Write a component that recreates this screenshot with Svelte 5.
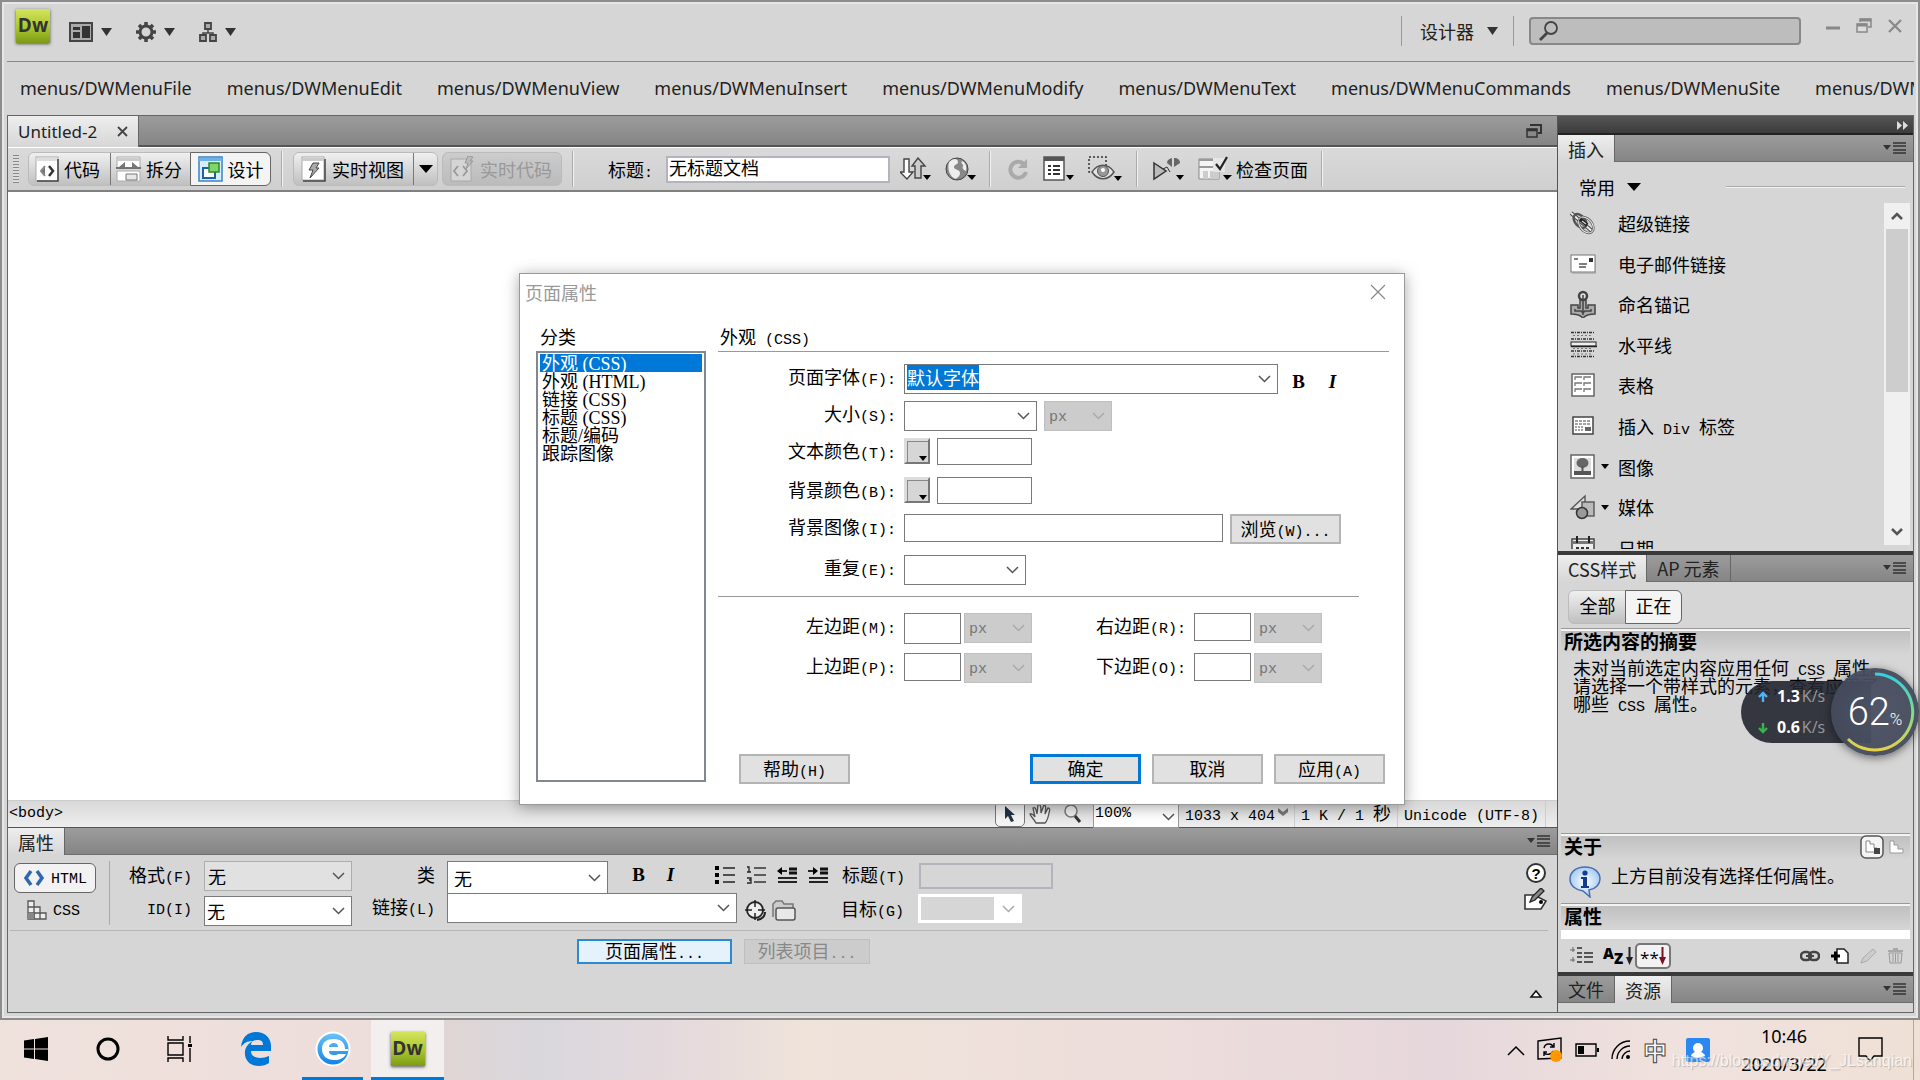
<script>
  import { onMount } from "svelte";

  const menus = ["File", "Edit", "View", "Insert", "Modify", "Text", "Commands", "Site", "Window"];
  const categories = ["外观 (CSS)", "外观 (HTML)", "链接 (CSS)", "标题 (CSS)", "标题/编码", "跟踪图像"];
  const inserts = [
    { icon: "link", text: "超级链接" },
    { icon: "mail", text: "电子邮件链接" },
    { icon: "anchor", text: "命名锚记" },
    { icon: "rule", text: "水平线" },
    { icon: "table", text: "表格" },
    { icon: "div", text: "插入 Div 标签" },
    { icon: "image", text: "图像", more: true },
    { icon: "media", text: "媒体", more: true },
    { icon: "date", text: "日期" },
  ];
  const margins = [
    { id: "ml", text: "左边距(M):", tall: true },
    { id: "mr", text: "右边距(R):" },
    { id: "mt", text: "上边距(P):" },
    { id: "mb", text: "下边距(O):" },
  ];

  let category = $state(categories[0]);
  let pageFont = $state("默认字体");
  let docTitle = $state("无标题文档");
  let fontInput;

  onMount(() => {
    fontInput.focus();
    fontInput.select();
  });

  const icons = {
    layout: [24, 20, `<rect x="1" y="1" width="22" height="18" fill="#aaa" stroke="#444" stroke-width="2"/><path d="M4 5h7v3H4zM4 10h7v6H4zM13 4h8v12h-8z" fill="#333"/>`],
    gear: [20, 20, `<circle cx="10" cy="10" r="6" fill="none" stroke="#444" stroke-width="3"/><path d="M10 0v4M10 16v4M0 10h4M16 10h4M3 3l3 3M14 14l3 3M17 3l-3 3M3 17l3-3" stroke="#444" stroke-width="3.500"/>`],
    site: [18, 20, `<path d="M9 7v4M4 13v-2h10v2" fill="none" stroke="#444" stroke-width="1.5"/><path d="M6 1h6v6H6zM1 13h6v6H1zM11 13h6v6h-6z" fill="#aaa" stroke="#444" stroke-width="1.8"/>`],
    down: [11, 8, `<path d="M0 0h11L5.500 8z" fill="#333"/>`],
    downBlack: [14, 8, `<path d="M0 0h14L7 8z" fill="#000"/>`],
    downSmall: [8, 5, `<path d="M0 0h8L4 5z" fill="#000"/>`],
    restore: [16, 15, `<path d="M4 4V1h11v8h-3" fill="none" stroke="#888" stroke-width="1.5"/><path d="M4 2h11" stroke="#888" stroke-width="3"/><rect x="1" y="6" width="10" height="8" fill="#ddd" stroke="#888" stroke-width="1.5"/><path d="M1 7h10" stroke="#888" stroke-width="3"/>`],
    restoreDark: [16, 15, `<path d="M4 2h11v8h-3" fill="none" stroke="#333" stroke-width="2"/><rect x="1" y="6" width="10" height="8" fill="#888" stroke="#333" stroke-width="1.5"/><path d="M1 7h10" stroke="#333" stroke-width="2.5"/>`],
    min: [14, 14, `<path d="M0 9h14" stroke="#888" stroke-width="3"/>`],
    close: [14, 14, `<path d="M1 1l12 12M13 1L1 13" stroke="#888" stroke-width="2.2"/>`],
    tabClose: [11, 11, `<path d="M1 1l9 9M10 1l-9 9" stroke="#444" stroke-width="1.8"/>`],
    dlgClose: [16, 16, `<path d="M1 1l14 14M15 1L1 15" stroke="#888" stroke-width="1.2"/>`],
    search: [20, 20, `<circle cx="12" cy="7" r="6" fill="none" stroke="#444" stroke-width="1.8"/><path d="M8 12l-7 7" stroke="#444" stroke-width="2.8"/>`],
    code: [24, 26, `<rect x="1" y="1" width="22" height="24" fill="#fff" stroke="#aaa"/><path d="M1 2h22v3H1z" fill="#ddd"/><path d="M23 3v22H2" fill="none" stroke="#444" stroke-width="1.5"/><path d="M10 11l-4 4 4 5z" fill="#777"/><path d="M10 10l-4 5 4 5" fill="none" stroke="#888" stroke-width="2"/><path d="M14 10l4 5-4 5" fill="none" stroke="#333" stroke-width="2.500"/>`],
    split: [25, 26, `<path d="M1 1h23v11H1zM1 15h23v10H1z" fill="#fff" stroke="#aaa"/><path d="M1 2h23v3H1z" fill="#ccc"/><path d="M9 6l-6 5h6zM16 6l6 5h-6z" fill="#777"/><path d="M0 12h25" stroke="#555" stroke-width="1.500"/><path d="M10 18h11v6H10z" fill="#e8e8e8" stroke="#777"/>`],
    design: [25, 26, `<rect x="1" y="1" width="23" height="24" fill="#d9ecfb" stroke="#3b82c4" stroke-width="1.5"/><path d="M1 2h23v3H1z" fill="#6fb0e6"/><rect x="5" y="12" width="12" height="10" fill="#fff" stroke="#1d62a8" stroke-width="2"/><rect x="11" y="7" width="10" height="9" fill="#7fd66a" stroke="#2b8a2b" stroke-width="1.5"/>`],
    live: [25, 26, `<rect x="1" y="1" width="22" height="23" fill="#fff" stroke="#aaa"/><path d="M1 2h22v3H1z" fill="#ccc"/><path d="M24 3v22H2" fill="none" stroke="#444" stroke-width="1.5"/><path d="M12 7h6l-3 5h3l-9 10 3-8H8z" fill="#aaa" stroke="#444"/>`],
    liveCode: [24, 26, `<rect x="1" y="3" width="20" height="22" fill="#d5d5d5" stroke="#aaa"/><path d="M8 10l-4 5 4 5M13 10l4 5-4 5" fill="none" stroke="#999" stroke-width="1.8"/><path d="M18 0l5 1-3 4h3l-7 8 2-6h-3z" fill="#bbb" stroke="#999"/>`],
    updown: [31, 24, `<path d="M4 2h5v13h4l-6 7-7-7h4z" fill="#fff" stroke="#444" stroke-width="1.4"/><path d="M15 21h6V9h4l-7-8-6 8h3z" fill="#ccc" stroke="#444" stroke-width="1.4"/><path d="M23 18h8l-4 5z"/>`],
    globe: [31, 24, `<circle cx="12" cy="12" r="11" fill="#888" stroke="#444"/><path d="M4 5c5-5 9-3 9 0s-4 2-4 5 6 2 6 6-3 4-4 6C5 20 2 13 4 5zM17 4c4 2 5 6 4 10-3-1-4-3-3-5s-3-2-1-5z" fill="#eee"/><path d="M22 18h9l-4 5z"/>`],
    refresh: [22, 22, `<path d="M17 6a8 8 0 1 0 2 8" fill="none" stroke="#aaa" stroke-width="4"/><path d="M20 1v9h-9z" fill="#aaa"/>`],
    options: [31, 26, `<rect x="1" y="1" width="20" height="23" fill="#fff" stroke="#555" stroke-width="1.5"/><path d="M1 3h20" stroke="#555" stroke-width="4"/><path d="M5 10h3M10 10h7M5 14h3M10 14h7M5 18h3M10 18h7" stroke="#333" stroke-width="2"/><path d="M23 19h8l-4 5z"/>`],
    eye: [34, 26, `<rect x="1" y="1" width="17" height="15" fill="none" stroke="#333" stroke-width="1.500" stroke-dasharray="2 2"/><path d="M4 16c6-9 16-9 22 0-6 9-16 9-22 0z" fill="#e4e4e4" stroke="#555" stroke-width="1.5"/><circle cx="15" cy="15" r="5.500" fill="#999" stroke="#555"/><circle cx="15" cy="14" r="2" fill="#fff"/><path d="M26 20h8l-4 5z"/>`],
    validate: [32, 24, `<path d="M1 6l12 8-12 8z" fill="#bbb" stroke="#333" stroke-width="1.5"/><path d="M14 6c0-3 2-4 5-5v9zM21 1c4 0 6 2 6 5l-6 4z" fill="#666"/><path d="M10 12l4-2 3 5" stroke="#333" fill="none"/><path d="M23 18h8l-4 5z"/>`],
    check: [34, 26, `<path d="M1 3h20v20H1z" fill="#f4f4f4" stroke="#888"/><path d="M1 3h20v2H1zM1 10h20v2H1z" fill="#999"/><path d="M5 15h5v8H5zM12 15h9v8h-9z" fill="#ccc"/><path d="M15 2h12v14H15z" fill="#e6e6e6"/><path d="M18 8l4 5 7-12" fill="none" stroke="#222" stroke-width="2.2"/><path d="M25 19h9l-5 5z"/>`],
    panelMenu: [24, 12, `<path d="M0 3h8L4 8z" fill="#333"/><path d="M10 1h13M10 4h13M10 8h13M10 11h13" stroke="#333" stroke-width="1.3"/>`],
    collapse: [12, 9, `<path d="M0 0l5 4.500L0 9zM6 0l5 4.500L6 9z" fill="#ddd"/>`],
    link: [26, 26, `<path d="M1 3l22 19" stroke="#444" stroke-width="4"/><path d="M1 3l22 19" stroke="#eee" stroke-width="2"/><g fill="none"><ellipse cx="10" cy="11" rx="8" ry="5" transform="rotate(50 10 11)" stroke="#555" stroke-width="2.500"/><ellipse cx="16" cy="15" rx="9" ry="6" transform="rotate(50 16 15)" stroke="#555" stroke-width="2.500"/><ellipse cx="16" cy="15" rx="9" ry="6" transform="rotate(50 16 15)" stroke="#eee"/></g><path d="M10 9l7 6" stroke="#222" stroke-width="4"/><path d="M12 11l4 3" stroke="#ccc" stroke-width="1.500"/>`],
    mail: [26, 20, `<rect x="1" y="1" width="24" height="17" fill="#fff" stroke="#777"/><path d="M2 19h24V3" fill="none" stroke="#999"/><path d="M4 5h4M9 10h8M9 13h7" stroke="#555" stroke-width="1.5"/><path d="M19 4h4v4h-4z" fill="#333"/>`],
    anchor: [26, 28, `<path d="M10 9h6v9h2v-3h7v9c-5 0-9 1-12 4-3-3-7-4-12-4v-9h7v3h2z" fill="#aaa" stroke="#444" stroke-width="1.5"/><circle cx="13" cy="6" r="4" fill="#ddd" stroke="#444" stroke-width="2.500"/><path d="M13 5v20M5 19v2h6l2 2 2-2h6v-2" fill="none" stroke="#444" stroke-width="1.500"/>`],
    rule: [27, 27, `<path d="M1 1.500h24M1 8h24M1 20h24M1 25.500h24" stroke="#333" stroke-width="1.3" stroke-dasharray="3 1 1 1"/><path d="M3 4.500h20M3 17.500h20M3 23h20" stroke="#777" stroke-dasharray="2 2"/><rect x="1" y="11" width="25" height="4" fill="#eee" stroke="#222"/><path d="M1 15.500h26" stroke="#222" stroke-width="1.5"/>`],
    table: [24, 24, `<rect x="1" y="1" width="22" height="22" fill="#fff" stroke="#666" stroke-width="1.5"/><path d="M4 7V4h7M13 7V4h7M4 13v-3h7M13 13v-3h7M4 19v-3h7M13 19v-3h7" fill="none" stroke="#777" stroke-width="1.3"/>`],
    div: [24, 20, `<rect x="2" y="1" width="20" height="17" fill="#fff" stroke="#444" stroke-width="1.5"/><path d="M4 5h16M4 8h16" stroke="#444" stroke-dasharray="3 1"/><path d="M4 11h8M4 14h8" stroke="#444" stroke-dasharray="2 1"/><path d="M14 11h6v4h-6z" fill="#666"/>`],
    image: [26, 26, `<rect x="1" y="1" width="23" height="23" fill="#fff" stroke="#666" stroke-width="1.5"/><rect x="4" y="4" width="17" height="13" fill="#ddd"/><ellipse cx="12.500" cy="9" rx="6" ry="5" fill="#666"/><path d="M12.500 12v6" stroke="#555" stroke-width="2"/><path d="M4 17h17v4H4z" fill="#555"/>`],
    media: [26, 26, `<path d="M1 15L15 2v13z" fill="#ddd" stroke="#555" stroke-width="1.4"/><rect x="12" y="8" width="12" height="14" fill="#bbb" stroke="#555" stroke-width="1.4"/><circle cx="12" cy="19" r="5.500" fill="#999" stroke="#333" stroke-width="1.5"/>`],
    date: [26, 26, `<path d="M2 4h22v20H2z" fill="#eee" stroke="#444" stroke-width="1.5"/><path d="M2 6h22v3H2z" fill="#777"/><path d="M7 1v7M19 1v7" stroke="#222" stroke-width="2"/><path d="M6 13h14M6 17h14" stroke="#333" stroke-width="2" stroke-dasharray="3 2"/>`],
    up: [12, 8, `<path d="M1 7l5-5 5 5" fill="none" stroke="#555" stroke-width="2.600"/>`],
    dn: [12, 8, `<path d="M1 1l5 5 5-5" fill="none" stroke="#555" stroke-width="2.600"/>`],
    pointer: [12, 18, `<path d="M1 1v13l3-3 3 6 3-1-3-6h4z" fill="#234"/>`],
    hand: [24, 22, `<path d="M7 20c-2-4-5-6-6-9 2-1 3 0 5 3L4 5c2-1 3 0 4 6l1-9c2-1 3 0 3 8l3-8c2 0 2 2 1 9l3-6c2 0 2 2 1 5-1 6-2 8-4 10z" fill="#eee" stroke="#555" stroke-width="1.3"/>`],
    zoom: [18, 20, `<circle cx="7" cy="7" r="6" fill="#eee" stroke="#777" stroke-width="1.5"/><path d="M11 12l5 6" stroke="#333" stroke-width="3"/>`],
    heart: [10, 8, `<path d="M0 0l5 4 5-4v4L5 8 0 4z" fill="#777"/>`],
    html: [22, 18, `<path d="M8 2L3 9l5 7M14 2l5 7-5 7" fill="none" stroke="#2f68b0" stroke-width="3.500"/>`],
    css: [20, 20, `<g fill="#eee" stroke="#555" stroke-width="1.3"><path d="M1 1h6v18H1zM7 7h6v12H7zM13 13h6v6h-6z"/><path d="M1 7h6M1 13h12M7 13v6" /></g><path d="M1 13h6v6H1z" fill="#888"/>`],
    ul: [20, 18, `<path d="M0 0h4v4H0zM0 7h4v4H0zM0 14h4v4H0z"/><path d="M8 2h12M8 9h12M8 16h12" stroke="#222" stroke-width="1.5"/>`],
    ol: [20, 18, `<path d="M1 1h2v5M1 6h4M1 12h4v2H3h2v3H1" fill="none" stroke="#222" stroke-width="1.3"/><path d="M8 2h12M8 9h12M8 16h12" stroke="#333" stroke-width="1.5"/>`],
    outdent: [20, 16, `<path d="M12 2h8M12 6h8" stroke="#111" stroke-width="3"/><path d="M1 11h19M1 15h19" stroke="#222" stroke-width="1.800"/><path d="M10 4H2" stroke="#111" stroke-width="1.800"/><path d="M0 4l5-4v8z"/>`],
    indent: [20, 16, `<path d="M12 2h8M12 6h8" stroke="#111" stroke-width="3"/><path d="M1 11h19M1 15h19" stroke="#222" stroke-width="1.800"/><path d="M0 4h8" stroke="#111" stroke-width="1.800"/><path d="M10 4L5 0v8z"/>`],
    target: [21, 21, `<circle cx="10" cy="10" r="8" fill="#eee" stroke="#222" stroke-width="1.800"/><path d="M10 0v7M10 13v7M0 10h7M13 10h7" stroke="#222" stroke-width="1.5"/><path d="M20 12c0 4-3 7-8 8" stroke="#222" stroke-width="2" fill="none"/>`],
    folder: [25, 21, `<path d="M1 17V4l3-3h6l2 3h9v4" fill="#ccc" stroke="#777" stroke-width="1.5"/><rect x="4" y="8" width="19" height="12" rx="2" fill="#e8e8e8" stroke="#555" stroke-width="1.5"/>`],
    edit: [24, 22, `<path d="M1 7h9l12 6-5 8H1z" fill="#fff" stroke="#333" stroke-width="1.600"/><path d="M6 14l2-5 9-9 3 3-9 9z" fill="#888" stroke="#222" stroke-width="1.3"/><circle cx="17" cy="14" r="2"/>`],
    tri: [14, 9, `<path d="M2 8l5-6 5 6z" fill="#fff" stroke="#111" stroke-width="1.5"/>`],
    stepsBox: [24, 24, `<rect x="1" y="1" width="22" height="22" rx="5" fill="#f4f4f4" stroke="#555" stroke-width="1.5"/><path d="M6 6h4v3h4v4h3v4H6z" fill="#fff" stroke="#888"/><path d="M14 13h6v6h-6z" fill="#444"/>`],
    steps: [16, 14, `<path d="M1 1h4v4h4v4h5v4H1z" fill="#fff" stroke="#999"/>`],
    info: [32, 32, `<defs><radialGradient id="ib"><stop offset="0" stop-color="#fff"/><stop offset="1" stop-color="#a9cdf5"/></radialGradient></defs><path d="M16 1C7 1 1 6 1 13s6 11 13 12l7 6-1-7c7-1 11-6 11-11C31 6 25 1 16 1z" fill="url(#ib)" stroke="#4a6fae" stroke-width="1.5"/><circle cx="16" cy="7" r="2.600" fill="#123c94"/><path d="M12 11h6v9h2v2h-8v-2h2v-7h-2z" fill="#123c94"/>`],
    tree: [24, 18, `<path d="M3 0v5M0 3h5M3 10v5M0 13h5" stroke="#666"/><path d="M7 1h5M7 6h5M7 10h5M7 15h5M14 6h9M14 10h9M14 15h9" stroke="#555" stroke-width="1.800"/>`],
    arrowDown: [7, 18, `<path d="M3.500 0v14" stroke="#222" stroke-width="2"/><path d="M0 10h7l-3.500 8z" fill="#222"/>`],
    arrowRed: [7, 18, `<path d="M3.500 0v14" stroke="#7a1020" stroke-width="2"/><path d="M0 10h7l-3.500 8z" fill="#7a1020"/>`],
    chain: [20, 12, `<rect x="1" y="2" width="10" height="8" rx="4" fill="none" stroke="#444" stroke-width="2.500"/><rect x="9" y="2" width="10" height="8" rx="4" fill="none" stroke="#444" stroke-width="2.500"/><path d="M6 6h8" stroke="#444" stroke-width="2"/>`],
    newRule: [18, 16, `<path d="M6 1h7l4 4v10H6z" fill="#fff" stroke="#222" stroke-width="1.5"/><path d="M0 8h9M4.500 3.500v9" stroke="#000" stroke-width="3"/>`],
    pencil: [16, 16, `<path d="M1 15l2-5L13 1l3 3-9 9z" fill="#ccc" stroke="#aaa"/>`],
    trash: [17, 16, `<path d="M1 3h15M6 1h5" stroke="#999" stroke-width="1.5"/><path d="M2 5h13l-1 10H3zM6 6v8M8.500 6v8M11 6v8" fill="none" stroke="#999"/>`],
    win: [24, 24, `<path d="M0 3.400l10-1.400v9.500H0zM11 1.900L24 0v11.500H11zM0 12.500h10V22L0 20.600zM11 12.500h13V24l-13-1.900z"/>`],
    cortana: [24, 24, `<circle cx="12" cy="12" r="10" fill="none" stroke="#000" stroke-width="3"/>`],
    taskview: [26, 26, `<path d="M1 0v4h15V0M1 26v-4h15v4M1 7h15v12H1zM23 0v7M23 12v14" fill="none" stroke="#000" stroke-width="1.400"/><path d="M21 8h4v3h-4z"/>`],
    edge: [30, 34, `<path d="M0 15C1 5 7 0 15 0c9 0 15 6 15 14v5H10c0 5 4 7 9 7 3 0 6-1 9-2v7c-3 2-6 3-10 3C9 34 3 28 4 19c1-5 4-8 8-10C6 9 3 11 0 15zM10 13h12c0-4-2-5-6-5-3 0-6 2-6 5z" fill="#0078d7" fill-rule="evenodd"/>`],
    ie: [36, 36, `<defs><linearGradient id="ieg" x2="0" y2="1"><stop offset="0" stop-color="#6cc5f8"/><stop offset="1" stop-color="#1180ea"/></linearGradient></defs><circle cx="18" cy="18" r="16.500" fill="url(#ieg)" stroke="#fff" stroke-width="2"/><path d="M33 20H14c0 3 2 4 5 4 2 0 3 0 4-1h8c-2 4-6 6-12 6C12 29 7 25 7 18S12 8 19 8s11 4 11 10h3zM14 16h9c0-3-2-4-4-4s-5 1-5 4z" fill="#fff" fill-rule="evenodd"/>`],
    chevron: [18, 11, `<path d="M1 10l8-8 8 8" fill="none" stroke="#000" stroke-width="1.500"/>`],
    sync: [26, 26, `<path d="M1 4l23-3v20L1 22z" fill="none" stroke="#000" stroke-width="1.400"/><path d="M7 11c1-5 7-5 9-2M17 6v4h-4M16 14c-1 4-7 4-9 2M7 19v-4h3" fill="none" stroke="#000" stroke-width="1.400"/><circle cx="19" cy="19" r="6" fill="#ff9800"/>`],
    battery: [24, 14, `<path d="M1 1h20v12H1z" fill="none" stroke="#000" stroke-width="1.400"/><path d="M3 3h6v8H3zM22 5h2v4h-2z"/>`],
    wifi: [20, 20, `<g fill="none" stroke="#000" stroke-width="1.400"><path d="M1 19C1 9 9 1 19 1M6 19C6 12 12 6 19 6M11 19c0-4 4-8 8-8"/></g><circle cx="17" cy="17" r="2"/>`],
    user: [24, 24, `<rect width="24" height="24" rx="2" fill="#2b88f0"/><path d="M12 5a5 5 0 0 1 5 5c0 2-1 3-2 4 2 1 4 2 4 4l-3 1c-1 1-7 1-8 0l-3-1c0-2 2-3 4-4-1-1-2-2-2-4a5 5 0 0 1 5-5z" fill="#fff"/>`],
    notice: [26, 26, `<path d="M1 1h23v18h-8l-4 5-4-5H1z" fill="none" stroke="#000" stroke-width="1.400"/>`],
    speedUp: [12, 12, `<path d="M6 11V2M2 6l4-4 4 4" fill="none" stroke="#4bb4f5" stroke-width="2.400"/>`],
    speedDown: [12, 12, `<path d="M6 1v9M2 6l4 4 4-4" fill="none" stroke="#35b44a" stroke-width="2.400"/>`],
  };
</script>

{#snippet icon(name)}
  <svg class="icon" width={icons[name][0]} height={icons[name][1]} viewBox="0 0 {icons[name][0]} {icons[name][1]}" aria-hidden="true">{@html icons[name][2]}</svg>
{/snippet}

<!-- latin runs are set in a half width face so they line up with the full width glyphs -->
{#snippet mix(text)}<span class="mix">{#each text.match(/[ -~]+|[^ -~]+/g) as run}{#if /[ -~]/.test(run)}<span class="lat">{run}</span>{:else}{run}{/if}{/each}</span>{/snippet}

<div class="screen">
  <div class="window">
    <header class="appbar">
      <div class="logo">Dw</div>
      <button class="drop">{@render icon("layout")}{@render icon("down")}</button>
      <button class="drop">{@render icon("gear")}{@render icon("down")}</button>
      <button class="drop">{@render icon("site")}{@render icon("down")}</button>
      <button class="workspace-menu">设计器{@render icon("down")}</button>
      <div class="search">
        {@render icon("search")}
        <input type="search" aria-label="搜索" />
      </div>
      <div class="winbtns">
        <button aria-label="最小化">{@render icon("min")}</button>
        <button aria-label="还原">{@render icon("restore")}</button>
        <button aria-label="关闭">{@render icon("close")}</button>
      </div>
    </header>

    <nav class="menubar">
      {#each menus as m}
        <button>menus/DWMenu{m}</button>
      {/each}
    </nav>

    <div class="work">
      <main class="left">
        <div class="tabs doc-tabs">
          <button class="tab active doc">Untitled-2{@render icon("tabClose")}</button>
          <span class="end">{@render icon("restoreDark")}</span>
        </div>

        <div class="toolbar">
          <span class="grip"></span>
          <div class="group views">
            <button>{@render icon("code")}代码</button>
            <button>{@render icon("split")}拆分</button>
            <button class="on">{@render icon("design")}设计</button>
          </div>
          <span class="sep"></span>
          <div class="group live">
            <button>{@render icon("live")}实时视图</button>
            <button class="arrow" aria-label="实时视图选项">{@render icon("downBlack")}</button>
          </div>
          <div class="group off">
            <button disabled>{@render icon("liveCode")}实时代码</button>
          </div>
          <span class="sep"></span>
          <label class="doc-label" for="doc-title">{@render mix("标题:")}</label>
          <input id="doc-title" class="doc-title" bind:value={docTitle} />
          <div class="tools">
            <button aria-label="文件管理">{@render icon("updown")}</button>
            <button aria-label="预览">{@render icon("globe")}</button>
          </div>
          <span class="sep"></span>
          <div class="tools wide">
            <button aria-label="刷新">{@render icon("refresh")}</button>
            <button aria-label="视图选项">{@render icon("options")}</button>
            <button aria-label="可视化助理">{@render icon("eye")}</button>
          </div>
          <span class="sep"></span>
          <div class="tools last">
            <button aria-label="验证标记">{@render icon("validate")}</button>
            <button class="check">{@render icon("check")}检查页面</button>
          </div>
          <span class="sep"></span>
        </div>

        <div class="canvas"></div>

        <div class="status">
          <button class="crumb lat">&lt;body&gt;</button>
          <button class="tool on" aria-label="选取">{@render icon("pointer")}</button>
          <button class="tool" aria-label="手形">{@render icon("hand")}</button>
          <button class="tool" aria-label="缩放">{@render icon("zoom")}</button>
          <select class="zoom-select" aria-label="缩放比率"><option>100%</option></select>
          <span class="cell">{@render mix("1033 x 404")}{@render icon("heart")}</span>
          <span class="cell">{@render mix("1 K / 1 秒")}</span>
          <span class="cell">{@render mix("Unicode (UTF-8)")}</span>
        </div>

        <section class="props">
          <div class="tabs">
            <button class="tab active">属性</button>
            <span class="end">{@render icon("panelMenu")}</span>
          </div>
          <div class="props-top">
            <div class="modes">
              <button class="on">{@render icon("html")}<span class="lat">HTML</span></button>
              <button>{@render icon("css")}<span class="lat">CSS</span></button>
            </div>
            <div class="props-grid">
              <label for="fmt">{@render mix("格式(F)")}</label>
              <select id="fmt" class="flat"><option>无</option></select>
              <label for="cls">类</label>
              <div class="line">
                <select id="cls" class="cls"><option>无</option></select>
                <button class="bi bold">B</button>
                <button class="bi italic">I</button>
                <div class="lists">
                  <button aria-label="项目列表">{@render icon("ul")}</button>
                  <button aria-label="编号列表">{@render icon("ol")}</button>
                  <button aria-label="文本凸出">{@render icon("outdent")}</button>
                  <button aria-label="文本缩进">{@render icon("indent")}</button>
                </div>
                <label for="ttl">{@render mix("标题(T)")}</label>
                <input id="ttl" class="ttl" disabled />
              </div>
              <label for="pid">{@render mix("ID(I)")}</label>
              <select id="pid" class="pid"><option>无</option></select>
              <label for="lnk">{@render mix("链接(L)")}</label>
              <div class="line">
                <select id="lnk" class="lnk"><option></option></select>
                <button aria-label="指向文件">{@render icon("target")}</button>
                <button aria-label="浏览文件">{@render icon("folder")}</button>
                <label class="goal" for="tgt">{@render mix("目标(G)")}</label>
                <select id="tgt" class="tgt" disabled><option></option></select>
              </div>
            </div>
            <div class="side">
              <button class="help" aria-label="帮助">?</button>
              <button aria-label="快速标签编辑器">{@render icon("edit")}</button>
            </div>
          </div>
          <div class="props-bottom">
            <button class="page-props">{@render mix("页面属性...")}</button>
            <button class="list-items" disabled>{@render mix("列表项目...")}</button>
            <span class="fold">{@render icon("tri")}</span>
          </div>
        </section>
      </main>

      <aside class="right">
        <div class="dock">{@render icon("collapse")}</div>
        <div class="tabs">
          <button class="tab active">插入</button>
          <span class="end">{@render icon("panelMenu")}</span>
        </div>
        <div class="common">
          <button>常用{@render icon("downBlack")}</button>
          <hr />
        </div>
        <div class="insert">
          <ul>
            {#each inserts as item}
              <li>
                <span class="pic">{@render icon(item.icon)}</span>
                <span class="more">{#if item.more}{@render icon("downSmall")}{/if}</span>
                {@render mix(item.text)}
              </li>
            {/each}
          </ul>
          <div class="scroll">
            <button aria-label="向上">{@render icon("up")}</button>
            <div class="thumb"></div>
            <button class="last" aria-label="向下">{@render icon("dn")}</button>
          </div>
        </div>

        <div class="tabs split">
          <button class="tab active">CSS样式</button>
          <button class="tab">AP 元素</button>
          <span class="end">{@render icon("panelMenu")}</span>
        </div>
        <div class="css">
          <div class="group pick">
            <button>全部</button>
            <button class="on">正在</button>
          </div>
          <h3>所选内容的摘要</h3>
          <p class="summary">{@render mix("未对当前选定内容应用任何 CSS 属性。")}<br />请选择一个带样式的元素，查看应用了<br />{@render mix("哪些 CSS 属性。")}</p>
          <h3>关于<span class="about">{@render icon("stepsBox")}{@render icon("steps")}</span></h3>
          <p class="note">{@render icon("info")}<span>上方目前没有选择任何属性。</span></p>
          <h3>属性</h3>
          <div class="blank"></div>
          <div class="css-tools">
            <button aria-label="类别视图">{@render icon("tree")}</button>
            <button class="az" aria-label="列表视图"><b>A</b><b class="z">Z</b>{@render icon("arrowDown")}</button>
            <button class="set" aria-label="只显示设置属性"><span>*</span><span>*</span>{@render icon("arrowRed")}</button>
            <span class="acts">{@render icon("chain")}{@render icon("newRule")}{@render icon("pencil")}{@render icon("trash")}</span>
          </div>
        </div>
        <div class="tabs split">
          <button class="tab">文件</button>
          <button class="tab active">资源</button>
          <span class="end">{@render icon("panelMenu")}</span>
        </div>
        <div class="foot"></div>
      </aside>
    </div>
  </div>

  <footer class="taskbar">
    <button aria-label="开始">{@render icon("win")}</button>
    <button aria-label="搜索">{@render icon("cortana")}</button>
    <button aria-label="任务视图">{@render icon("taskview")}</button>
    <button class="pinned" aria-label="Edge">{@render icon("edge")}</button>
    <button class="running" aria-label="浏览器">{@render icon("ie")}</button>
    <button class="running current"><span class="logo">Dw</span></button>
    <div class="tray">
      {@render icon("chevron")}
      {@render icon("sync")}
      {@render icon("battery")}
      {@render icon("wifi")}
      <span class="ime">中</span>
      {@render icon("user")}
      <div class="clock"><span>10:46</span><span>2020/3/22</span></div>
      {@render icon("notice")}
    </div>
    <span class="mark">https://blog.csdn.net/Y_JLsanqian</span>
  </footer>

  <div class="dialog" role="dialog" aria-labelledby="dlg-title">
    <div class="dlg-title">
      <span id="dlg-title">页面属性</span>
      <button aria-label="关闭">{@render icon("dlgClose")}</button>
    </div>
    <div class="dlg-body">
      <div class="cats">
        <label for="cats">分类</label>
        <select id="cats" size="6" bind:value={category}>
          {#each categories as c}
            <option value={c}>{c}</option>
          {/each}
        </select>
      </div>
      <div class="pane">
        <h2>{@render mix("外观 (CSS)")}</h2>
        <div class="form">
          <label for="f1">{@render mix("页面字体(F):")}</label>
          <div class="ctl">
            <input id="f1" class="combo" bind:value={pageFont} bind:this={fontInput} />
            <button class="bi bold">B</button>
            <button class="bi italic">I</button>
          </div>
          <label for="f2">{@render mix("大小(S):")}</label>
          <div class="ctl">
            <select id="f2" class="size"><option></option></select>
            <select class="px" disabled aria-label="大小单位"><option>px</option></select>
          </div>
          <label for="f3">{@render mix("文本颜色(T):")}</label>
          <div class="ctl">
            <button class="swatch" aria-label="选取文本颜色">{@render icon("downSmall")}</button>
            <input id="f3" class="color" />
          </div>
          <label for="f4">{@render mix("背景颜色(B):")}</label>
          <div class="ctl">
            <button class="swatch" aria-label="选取背景颜色">{@render icon("downSmall")}</button>
            <input id="f4" class="color" />
          </div>
          <label for="f5">{@render mix("背景图像(I):")}</label>
          <div class="ctl">
            <input id="f5" class="file" />
            <button class="btn">{@render mix("浏览(W)...")}</button>
          </div>
          <label for="f6">{@render mix("重复(E):")}</label>
          <div class="ctl">
            <select id="f6" class="repeat"><option></option></select>
          </div>
        </div>
        <div class="margins">
          {#each margins as m}
            <label for={m.id}>{@render mix(m.text)}</label>
            <div class="ctl">
              <input id={m.id} class:tall={m.tall} />
              <select class="px" disabled aria-label="{m.text}单位"><option>px</option></select>
            </div>
          {/each}
        </div>
        <div class="actions">
          <button class="btn help-btn">{@render mix("帮助(H)")}</button>
          <button class="btn ok">确定</button>
          <button class="btn">取消</button>
          <button class="btn">{@render mix("应用(A)")}</button>
        </div>
      </div>
    </div>
  </div>

  <div class="speed">
    <div class="rates">
      <div>{@render icon("speedUp")}<b>1.3</b><span>K/s</span></div>
      <div>{@render icon("speedDown")}<b>0.6</b><span>K/s</span></div>
    </div>
    <div class="ball">
      <svg class="ring" viewBox="0 0 88 88" aria-hidden="true">
        <defs>
          <linearGradient id="rg" x1="0" y1="1" x2="0" y2="0">
            <stop offset="0" stop-color="#e6d04a" />
            <stop offset="0.5" stop-color="#7bdc8e" />
            <stop offset="1" stop-color="#35cfe0" />
          </linearGradient>
        </defs>
        <path d="M44 6A38 38 0 1 1 17 71" fill="none" stroke="url(#rg)" stroke-width="3" />
      </svg>
      <span class="num">62</span><span class="pct">%</span>
    </div>
  </div>
</div>

<style>
  :global(body) {
    margin: 0;
    background: #d6d6d6;
  }

  .screen {
    position: relative;
    display: flex;
    flex-direction: column;
    min-height: 100vh;
    overflow: hidden;
    font: 18px/18px "Noto Sans CJK SC", sans-serif;
    color: #000;
  }
  .screen :global(*) {
    box-sizing: border-box;
  }
  button {
    font: inherit;
    color: inherit;
    border: 0;
    padding: 0;
    background: none;
    white-space: nowrap;
  }
  input, select {
    font: inherit;
    color: #000;
    margin: 0;
    min-width: 0;
    padding: 0 2px;
    border: 1px solid #7a7a7a;
    border-radius: 0;
    background-color: #fff;
    outline: none;
  }
  select {
    appearance: none;
    padding: 0 4px;
    background-repeat: no-repeat;
    background-position: right 6px center;
    background-image: url("data:image/svg+xml,%3Csvg xmlns='http://www.w3.org/2000/svg' width='13' height='8'%3E%3Cpath d='M1 1l5.500 5.500L12 1' fill='none' stroke='%23555' stroke-width='1.500'/%3E%3C/svg%3E");
  }
  select:disabled {
    opacity: 1;
    background-image: url("data:image/svg+xml,%3Csvg xmlns='http://www.w3.org/2000/svg' width='13' height='8'%3E%3Cpath d='M1 1l5.500 5.500L12 1' fill='none' stroke='%23aaa' stroke-width='1.500'/%3E%3C/svg%3E");
  }
  .icon {
    display: block;
    flex: none;
  }
  .mix {
    white-space: pre;
  }
  .lat {
    font-family: "Liberation Mono", monospace;
    font-size: 15px;
  }
  .mix .lat {
    line-height: 0;
  }

  /* frame */
  .window {
    flex: 1;
    display: flex;
    flex-direction: column;
    min-width: 0;
    padding: 0 4px 5px 5px;
    border: 2px solid #8d8d8d;
    background: #d6d6d6;
    box-shadow: inset 0 0 0 2px #e6e6e6;
  }
  .appbar {
    display: flex;
    align-items: center;
    height: 60px;
    padding: 0 12px 12px 9px;
    border-bottom: 1px solid #888;
  }
  .logo {
    display: grid;
    place-items: center;
    width: 34px;
    height: 34px;
    margin-right: 4px;
    background: linear-gradient(#d3e45c, #a9c62c 55%, #7d9a18);
    box-shadow: 0 1px 3px #555;
    font: bold 19px/19px "Open Sans", sans-serif;
    color: #333;
  }
  .drop {
    display: flex;
    align-items: center;
    gap: 8px;
    margin: 12px 9px 0 15px;
  }
  .workspace-menu {
    display: flex;
    align-items: center;
    gap: 13px;
    height: 30px;
    margin: 10px 15px 0 auto;
    padding: 0 15px 0 18px;
    border: solid #999;
    border-width: 0 1px;
    color: #222;
  }
  .search {
    display: flex;
    align-items: center;
    width: 272px;
    height: 28px;
    margin-top: 11px;
    padding: 0 8px;
    border: 2px solid #888;
    border-radius: 4px;
    background: #bdbdbd;
  }
  .search input {
    flex: 1;
    border: 0;
    background: none;
  }
  .winbtns {
    display: flex;
    gap: 16px;
    margin-left: 25px;
  }
  .menubar {
    display: flex;
    align-items: center;
    gap: 35px;
    height: 53px;
    padding: 0 0 2px 13px;
    overflow: hidden;
    font: 18px/24px "Noto Sans", sans-serif;
    color: #222;
  }

  .work {
    flex: 1;
    display: grid;
    grid-template-columns: minmax(0, 1fr) 356px;
    border: 1px solid #666;
  }
  .left, .right {
    display: flex;
    flex-direction: column;
    min-width: 0;
  }

  .tabs {
    display: flex;
    align-items: stretch;
    height: 27px;
    border-bottom: 1px solid #6e6e6e;
    background: linear-gradient(#9c9c9c, #858585);
  }
  .tab {
    height: 26px;
    padding: 0 10px;
    border-right: 1px solid #666;
    color: #222;
  }
  .tab.active {
    height: 27px;
    background: linear-gradient(#eee, #d6d6d6);
  }
  .end {
    display: flex;
    align-items: center;
    margin-left: auto;
    padding-right: 6px;
  }
  .doc-tabs {
    height: 31px;
    border-bottom: 2px solid #555;
  }
  .tab.doc {
    display: flex;
    align-items: center;
    gap: 20px;
    height: 31px;
    font: 17px/24px "Noto Sans", sans-serif;
  }
  .doc-tabs .end {
    padding-right: 15px;
  }

  .toolbar {
    display: flex;
    align-items: center;
    height: 45px;
    padding-left: 5px;
    border-top: 1px solid #fff;
    border-bottom: 2px solid #808080;
    background: linear-gradient(#dadada, #cfcfcf);
  }
  .grip {
    width: 6px;
    height: 28px;
    margin-right: 9px;
    background: repeating-linear-gradient(#888 0 1px, #ddd 1px 3px);
  }
  .sep {
    width: 2px;
    height: 36px;
    margin: 0 10px;
    border-left: 1px solid #aaa;
    background: #f2f2f2;
  }
  .group {
    display: flex;
    height: 34px;
    border: 1px solid #bbb;
    border-radius: 6px;
    background: linear-gradient(#f0f0f0, #c0c0c0);
  }
  .group button {
    display: flex;
    align-items: center;
    justify-content: center;
    gap: 6px;
    width: 81px;
    padding-right: 2px;
  }
  .views button {
    gap: 5px;
    padding-right: 4px;
  }
  .group button + button {
    border-left: 1px solid #777;
  }
  .group .on {
    margin: -1px;
    padding-right: 0;
    border: 1px solid #666;
    border-radius: 0 6px 6px 0;
    background: #f4f4f4;
  }
  .group.live button {
    width: 119px;
  }
  .group.live .arrow {
    width: 24px;
    padding: 0;
  }
  .group.off {
    margin-left: 4px;
    background: linear-gradient(#ccc, #bbb);
    color: #999;
    text-shadow: 1px 1px #eee;
  }
  .group.off button {
    width: 118px;
    color: #999;
  }
  .doc-label {
    margin: 0 13px 0 24px;
  }
  .doc-title {
    width: 224px;
    height: 27px;
    padding: 0 1px 4px;
    border: 2px solid #b4b4bc;
  }
  .tools {
    display: flex;
    gap: 14px;
    margin: 0 3px 0 10px;
  }
  .tools.wide {
    gap: 14px;
    margin: 0 4px 0 6px;
  }
  .tools.last {
    gap: 13px;
    margin-left: 5px;
  }
  .check {
    display: flex;
    align-items: center;
    gap: 4px;
  }

  .canvas {
    flex: 1;
    min-height: 200px;
    background: #fff;
  }

  .status {
    display: flex;
    align-items: center;
    height: 28px;
    padding-right: 11px;
    border-top: 1px solid #ccc;
    border-bottom: 1px solid #555;
    background: linear-gradient(#d8d8d8, #eee);
  }
  .crumb {
    margin: 0 auto 0 1px;
  }
  .tool {
    display: grid;
    place-items: center;
    width: 32px;
    height: 26px;
  }
  .tool.on {
    width: 30px;
    border: 1px solid #777;
    border-radius: 5px;
    background: #f4f4f4;
  }
  .zoom-select {
    width: 86px;
    height: 27px;
    margin-left: 4px;
    padding: 0 1px;
    border-color: #999;
    background-position: right 3px bottom 6px;
    font: 15px/18px "Liberation Mono", monospace;
  }
  .cell {
    display: flex;
    align-items: center;
    gap: 3px;
    height: 26px;
    padding: 0 6px 5px;
    border-right: 1px solid #ccc;
  }

  /* property inspector */
  .props-top {
    display: flex;
    height: 76px;
    margin: 0 9px 0 2px;
    padding: 6px 0 5px 4px;
    border-bottom: 1px solid #b5b5b5;
  }
  .modes {
    width: 96px;
    border-right: 1px solid #aaa;
  }
  .modes button {
    display: flex;
    align-items: center;
    gap: 6px;
    width: 82px;
    height: 30px;
    margin-top: 2px;
    padding-left: 13px;
  }
  .modes .on {
    padding-left: 8px;
    border: 1px solid #666;
    border-radius: 6px;
    background: #f2f2f2;
  }
  .modes .lat {
    padding-top: 4px;
  }
  .props-grid {
    display: grid;
    grid-template-columns: 76px 148px 71px 1fr;
    grid-template-rows: 32px 32px;
    column-gap: 12px;
    margin-left: 6px;
  }
  .props-grid label {
    line-height: 26px;
    text-align: right;
  }
  .flat {
    height: 30px;
    padding-left: 3px;
    border-color: #adadad;
    background-color: #e1e1e1;
  }
  .pid {
    height: 30px;
    margin-top: 3px;
    padding-left: 2px;
  }
  .line {
    display: flex;
    align-items: flex-start;
  }
  .line button {
    height: 28px;
  }
  .cls {
    width: 161px;
    height: 33px;
    padding-left: 6px;
  }
  .bi {
    width: 15px;
    font: bold 19px/28px "Liberation Serif", serif;
  }
  .italic {
    font-style: italic;
  }
  .line .bold {
    margin: 0 17px 0 23px;
  }
  .lists {
    display: flex;
    gap: 11px;
    margin: 0 14px 0 37px;
  }
  .lists button {
    display: flex;
    align-items: center;
  }
  .ttl {
    width: 134px;
    height: 26px;
    margin: 2px 0 0 14px;
    border: 2px solid #b4b4bc;
    background: #d6d6d6;
  }
  .lnk {
    width: 290px;
    height: 30px;
    margin-right: 8px;
  }
  .lnk ~ button {
    margin: 3px 6px 0 0;
  }
  .goal {
    margin: 2px 14px 0 38px;
  }
  .tgt {
    width: 104px;
    height: 29px;
    margin-top: 1px;
    border: 3px solid #fff;
  }
  .tgt:disabled {
    background:
      url("data:image/svg+xml,%3Csvg xmlns='http://www.w3.org/2000/svg' width='13' height='8'%3E%3Cpath d='M1 1l5.500 5.500L12 1' fill='none' stroke='%23aaa' stroke-width='1.500'/%3E%3C/svg%3E") no-repeat right 4px center,
      linear-gradient(#fff, #fff) no-repeat right / 25px 100%,
      #d6d6d6;
  }
  .side {
    display: flex;
    flex-direction: column;
    align-items: center;
    gap: 5px;
    margin-left: auto;
    padding-top: 2px;
  }
  .help {
    width: 20px;
    height: 20px;
    border: 2px solid #333;
    border-radius: 50%;
    background: #fff;
    font: bold 15px/15px "Liberation Sans", sans-serif;
  }
  .props-bottom {
    display: flex;
    align-items: flex-start;
    gap: 12px;
    height: 81px;
    padding: 8px 14px 14px 569px;
  }
  .page-props {
    width: 155px;
    height: 25px;
    padding-bottom: 3px;
    border: 2px solid #2a8ad8;
    background: #e5f1fb;
  }
  .list-items {
    width: 126px;
    height: 25px;
    padding-bottom: 3px;
    border: 1px solid #bfbfbf;
    background: #ccc;
    color: #888;
  }
  .fold {
    align-self: flex-end;
    margin-left: auto;
  }

  /* panel dock */
  .right {
    border-left: 1px solid #555;
  }
  .dock {
    display: flex;
    justify-content: flex-end;
    height: 19px;
    padding: 5px 4px;
    border-bottom: 2px solid #222;
    background: linear-gradient(#555, #3c3c3c);
  }
  .common {
    display: flex;
    align-items: center;
    justify-content: space-between;
    height: 41px;
    padding: 9px 8px 0 21px;
  }
  .common button {
    display: flex;
    align-items: center;
    gap: 12px;
  }
  .common hr {
    width: 179px;
    margin: 0;
    border: 0;
    border-top: 1px solid #aaa;
    border-bottom: 1px solid #f4f4f4;
  }
  .insert {
    display: flex;
    height: 346px;
    margin-bottom: 2px;
    overflow: hidden;
  }
  .insert ul {
    flex: 1;
    display: grid;
    grid-template-rows: repeat(9, 1fr);
    height: 365px;
    margin: 0;
    padding: 0;
    list-style: none;
  }
  .insert li {
    display: flex;
    align-items: center;
  }
  .pic {
    display: grid;
    place-items: center;
    width: 28px;
    margin-left: 11px;
  }
  .more {
    width: 21px;
    padding-left: 4px;
  }
  .scroll {
    display: flex;
    flex-direction: column;
    align-items: center;
    width: 26px;
    height: 342px;
    margin-right: 3px;
    background: #f0f0f0;
  }
  .scroll button {
    display: grid;
    place-items: center;
    height: 26px;
  }
  .thumb {
    width: 22px;
    height: 163px;
    background: #cdcdcd;
  }
  .scroll .last {
    margin-top: auto;
  }
  .split {
    height: 31px;
    border-top: 4px solid #3a3a3a;
  }
  .css {
    flex: 1;
    display: flex;
    flex-direction: column;
    padding: 8px 3px 0;
  }
  .pick {
    align-self: flex-start;
    margin: 0 0 4px 7px;
  }
  .pick button {
    width: 57px;
    padding: 0 0 5px;
  }
  h3 {
    display: flex;
    justify-content: space-between;
    height: 27px;
    margin: 0;
    padding: 0 5px 0 3px;
    border-top: 1px solid #999;
    box-shadow: inset 0 2px #f4f4f4;
    background: linear-gradient(#bebebe, #d6d6d6);
    font: bold 19px/24px "Noto Sans CJK SC", sans-serif;
  }
  .summary {
    flex: 1;
    margin: 0;
    padding: 3px 0 0 12px;
    white-space: nowrap;
  }
  .about {
    display: flex;
    align-items: center;
    gap: 5px;
  }
  .note {
    display: flex;
    gap: 10px;
    height: 43px;
    margin: 0;
    padding: 6px 0 0 8px;
  }
  .blank {
    height: 9px;
    background: #fff;
  }
  .css-tools {
    display: flex;
    align-items: center;
    height: 33px;
    padding: 0 6px 0 9px;
  }
  .az, .set {
    display: flex;
    align-items: center;
    height: 26px;
    margin-left: 9px;
    font: bold 15px/15px "Open Sans", sans-serif;
  }
  .az b {
    padding-bottom: 5px;
  }
  .az .z {
    padding: 6px 3px 0 0;
  }
  .set {
    margin-left: 2px;
    padding: 0 3px;
    border: 2px solid #777;
    border-radius: 5px;
    background: #f2f2f2;
    font-size: 17px;
    font-weight: normal;
  }
  .set span {
    padding-top: 4px;
  }
  .acts {
    display: flex;
    align-items: center;
    gap: 11px;
    margin-left: auto;
  }
  .foot {
    height: 9px;
  }

  /* taskbar */
  .taskbar {
    position: relative;
    display: flex;
    height: 60px;
    background: linear-gradient(90deg, #efe1dc, #eddedb 19%, #e0d5d4 23%, #d9d7dc 28%, #e6dadc 36%, #efe3da 42%, #eddddb 60%, #e6d7dc 75%, #f0e2dd 88%, #efe0d6);
  }
  .taskbar button {
    display: grid;
    place-items: center;
    width: 72px;
    border-bottom: 3px solid transparent;
  }
  .taskbar .pinned {
    width: 80px;
  }
  .taskbar .running {
    width: 61px;
    margin-left: 6px;
    border-bottom-color: #0078d7;
  }
  .taskbar .current {
    width: 73px;
    margin-left: 8px;
    background: #f3efee;
  }
  .taskbar .logo {
    margin: 0;
  }
  .tray {
    display: flex;
    align-items: center;
    gap: 12px;
    margin-left: auto;
    padding-right: 29px;
    border-right: 1px solid #aaa;
    margin-right: 6px;
  }
  .ime {
    width: 24px;
    margin-right: 7px;
    font: bold 24px/24px "Noto Sans CJK SC", sans-serif;
    color: #fff;
    -webkit-text-stroke: 1px #444;
  }
  .clock {
    display: flex;
    flex-direction: column;
    align-items: center;
    gap: 10px;
    width: 124px;
    font: 18px/18px "Noto Sans", sans-serif;
  }
  .mark {
    position: absolute;
    right: 8px;
    bottom: 8px;
    font: 16px/22px "Liberation Sans", sans-serif;
    color: #fff;
    text-shadow: 1px 1px 1px #999;
    opacity: 0.6;
  }

  /* page properties */
  .dialog {
    position: absolute;
    left: 519px;
    top: 273px;
    display: flex;
    flex-direction: column;
    width: 886px;
    height: 532px;
    border: 1px solid #999;
    background: #fff;
    box-shadow: 0 2px 14px rgba(0, 0, 0, 0.35);
  }
  .dlg-title {
    display: flex;
    align-items: center;
    justify-content: space-between;
    height: 38px;
    padding: 0 18px 2px 5px;
    color: #999;
  }
  .dlg-body {
    flex: 1;
    display: flex;
    padding: 12px 15px 20px 16px;
  }
  .cats {
    display: flex;
    flex-direction: column;
    width: 170px;
  }
  .cats label {
    height: 27px;
    padding-left: 4px;
    line-height: 24px;
  }
  .cats select {
    height: 431px;
    padding: 0 2px;
    border: 2px solid #828790;
    background-image: none;
    font: 18px/18px "Liberation Serif", "Noto Sans CJK SC", serif;
    overflow: hidden;
  }
  /* rows are 18px apart while the glyph box is 26px high */
  .cats option {
    height: 26px;
    min-height: 0;
    margin: -8px 0;
    padding: 0 2px;
  }
  .cats option:first-child {
    margin-top: -4px;
  }
  .cats option:checked {
    background: linear-gradient(#0078d7, #0078d7) no-repeat 0 5px / 100% 18px;
    color: #fff;
  }
  .pane {
    flex: 1;
    display: flex;
    flex-direction: column;
    padding-left: 12px;
  }
  h2 {
    height: 28px;
    margin: 0 0 12px;
    padding-left: 2px;
    border-bottom: 1px solid #999;
    font: 18px/24px "Noto Sans CJK SC", sans-serif;
  }
  .form {
    display: grid;
    grid-template-columns: 178px 1fr;
    grid-template-rows: 37px 37px 39px 37px 41px 41px;
    column-gap: 8px;
    margin-right: 30px;
    border-bottom: 1px solid #999;
  }
  .form label, .margins label {
    line-height: 25px;
    text-align: right;
  }
  .ctl {
    display: flex;
    align-items: flex-start;
    gap: 7px;
  }
  .combo {
    flex: none;
    width: 374px;
    height: 30px;
    padding-bottom: 4px;
    background: #fff url("data:image/svg+xml,%3Csvg xmlns='http://www.w3.org/2000/svg' width='13' height='8'%3E%3Cpath d='M1 1l5.500 5.500L12 1' fill='none' stroke='%23555' stroke-width='1.500'/%3E%3C/svg%3E") no-repeat right 6px center;
  }
  .combo::selection {
    background: #0078d7;
    color: #fff;
  }
  .ctl .bi {
    margin: 4px 6px 0;
  }
  .size {
    width: 133px;
    height: 30px;
  }
  .px {
    width: 68px;
    height: 30px;
    padding-top: 3px;
    border-color: #bfbfbf;
    background-color: #ccc;
    font: 15px/18px "Liberation Mono", monospace;
    color: #777;
  }
  .swatch {
    display: flex;
    align-items: flex-end;
    justify-content: flex-end;
    width: 26px;
    height: 26px;
    padding: 1px;
    border: 2px solid;
    border-color: #ddd #777 #777 #ddd;
    background: #d6d6d6;
    box-shadow: inset 1px 1px #ddd, inset 2px 2px #888;
  }
  .color {
    width: 95px;
    height: 27px;
  }
  .file {
    width: 319px;
    height: 28px;
  }
  .repeat {
    width: 122px;
    height: 30px;
  }
  .btn {
    width: 111px;
    height: 30px;
    padding-bottom: 2px;
    border: 2px solid #b4b4b4;
    background: #e1e1e1;
  }
  .ok {
    border: 3px solid #0078d7;
  }
  .margins {
    display: grid;
    grid-template-columns: 178px 128px 146px 1fr;
    grid-auto-rows: 40px;
    column-gap: 8px;
    margin-top: 16px;
  }
  .margins .ctl {
    gap: 3px;
  }
  .margins input {
    width: 57px;
    height: 28px;
  }
  .margins .tall {
    height: 31px;
  }
  .actions {
    display: flex;
    gap: 11px;
    margin-top: auto;
    padding: 0 4px 0 21px;
  }
  .help-btn {
    margin-right: auto;
  }

  /* network meter */
  .speed {
    position: absolute;
    right: 1px;
    top: 668px;
    display: flex;
    align-items: center;
  }
  .rates {
    width: 130px;
    height: 62px;
    margin-right: -40px;
    border-radius: 31px 0 0 31px;
    background: rgba(34, 38, 48, 0.9);
    color: #fff;
    font: 16px/31px "Open Sans", sans-serif;
  }
  .rates div {
    display: flex;
    align-items: center;
    height: 31px;
    padding-left: 16px;
  }
  .rates b {
    margin: 0 2px 0 8px;
  }
  .rates span {
    color: #999;
  }
  .ball {
    position: relative;
    display: flex;
    align-items: baseline;
    justify-content: center;
    width: 88px;
    height: 88px;
    border-radius: 50%;
    background: radial-gradient(rgba(75, 82, 100, 0.97), rgba(66, 72, 88, 0.94));
    box-shadow: 0 2px 8px rgba(0, 0, 0, 0.5);
    color: #fff;
    font: 300 38px/88px Roboto, sans-serif;
  }
  .ring {
    position: absolute;
    inset: 0;
  }
  .pct {
    font-size: 17px;
  }
</style>
